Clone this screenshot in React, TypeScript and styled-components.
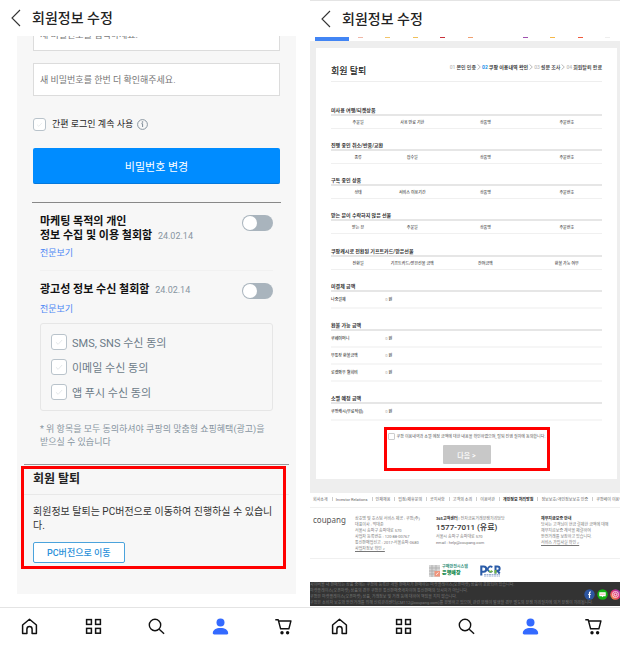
import React from 'react';
import styled, { createGlobalStyle, css } from 'styled-components';

const GlobalStyle = createGlobalStyle`
  *, *::before, *::after { box-sizing: border-box; }
  body {
    margin: 0;
    background: #fff;
    color: #222;
    font-family: Roboto, "Noto Sans CJK KR", sans-serif;
  }
  h1, h2, h3, p, ul, ol, address { margin: 0; padding: 0; font-style: normal; }
  ul, ol { list-style: none; }
  a { color: inherit; text-decoration: none; }
  button, input { font-family: inherit; margin: 0; }
`;

const Screens = styled.div`
  display: grid;
  grid-template-columns: minmax(0, 1fr) minmax(0, 1fr);
  min-height: 100vh;
`;

const Phone = styled.section<{ $ruled?: boolean }>`
  display: flex;
  flex-direction: column;
  min-width: 0;
  overflow: hidden;
  border-top: ${(p) => (p.$ruled ? '1px solid #e4e4e4' : '0')};
`;

const Header = styled.header`
  display: flex;
  align-items: center;
  gap: 11px;
  height: 36px;
  padding: 0 11px;
  flex: none;
`;

const BackButton = styled.button`
  display: flex;
  padding: 0;
  border: 0;
  background: none;
  color: #333;
`;

const Title = styled.h1`
  font-size: 14px;
  line-height: 20px;
  font-weight: 500;
  color: #222;
`;

const Main = styled.main`
  flex: 1;
  overflow: hidden;
`;

/* ---------- left screen ---------- */

const Panel = styled.div`
  margin: 0 14px 13px 17px;
  padding: 0 16px 31px;
  background: #f7f7f7;
  overflow: hidden;
`;

const PasswordFields = styled.div`
  display: flex;
  flex-direction: column;
  gap: 12px;
  margin-top: -18px;
`;

const TextField = styled.input`
  width: 100%;
  height: 33px;
  padding: 0 6px;
  border: 1px solid #dcdcdc;
  border-radius: 0;
  background: #fff;
  font-size: 9px;
  &::placeholder { color: #777; opacity: 1; }
`;

const tick = css`
  background-image: url("data:image/svg+xml,%3Csvg xmlns='http://www.w3.org/2000/svg' viewBox='0 0 16 16'%3E%3Cpath d='M4.5 8.3l2.5 2.4 4.6-5' fill='none' stroke='%23dfe3e6' stroke-width='1'/%3E%3C/svg%3E");
`;

const CheckInput = styled.input<{ $size: number }>`
  appearance: none;
  flex: none;
  width: ${(p) => p.$size}px;
  height: ${(p) => p.$size}px;
  border: 1px solid ${(p) => (p.$size > 8 ? '#b9c3cb' : '#ccc')};
  border-radius: ${(p) => (p.$size > 8 ? 3 : 1)}px;
  background-color: #fff;
  ${(p) => p.$size > 8 && tick}
`;

const EasyLogin = styled.div`
  display: flex;
  align-items: center;
  gap: 4px;
  margin-top: 21px;
  height: 14px;
`;

const EasyLabel = styled.label`
  display: flex;
  align-items: center;
  gap: 6px;
  font-size: 9px;
  line-height: 14px;
  color: #222;
`;

const PrimaryButton = styled.button`
  display: block;
  width: 100%;
  height: 36px;
  margin-top: 17px;
  border: 0;
  border-bottom: 1px solid #0478dc;
  border-radius: 2px;
  background: #008cff;
  color: #fff;
  font-size: 11px;
`;

const Consents = styled.div`
  margin: 18px -1px 0;
  padding: 0 8px 15px;
  border-top: 1px solid #888;
`;

const Consent = styled.section<{ $first?: boolean }>`
  padding-top: 12px;
  padding-bottom: ${(p) => (p.$first ? 10 : 0)}px;
  border-bottom: ${(p) => (p.$first ? '1px solid #f1f1f1' : '0')};
`;

const ConsentHead = styled.div`
  display: flex;
  justify-content: space-between;
  align-items: flex-start;
`;

const ConsentTitle = styled.h2`
  font-size: 11px;
  line-height: 14px;
  font-weight: 700;
  color: #111;
`;

const ConsentDate = styled.time`
  margin-left: 3px;
  font-size: 9px;
  line-height: 9px;
  font-weight: 400;
  color: #8795a1;
`;

const Toggle = styled.input`
  appearance: none;
  flex: none;
  display: flex;
  width: 31px;
  height: 16px;
  padding: 1px;
  border-radius: 8px;
  background: #a9b4bd;
  &::before {
    content: '';
    width: 14px;
    height: 14px;
    border-radius: 50%;
    background: #fff;
  }
`;

const DetailLink = styled.a`
  display: block;
  width: max-content;
  margin-top: 3px;
  font-size: 9px;
  line-height: 14px;
  color: #4b86f5;
`;

const Channels = styled.ul`
  display: flex;
  flex-direction: column;
  gap: 9px;
  margin-top: 7px;
  padding: 10px;
  border: 1px solid #e6e6e6;
  border-radius: 3px;
`;

const ChannelLabel = styled.label`
  display: flex;
  align-items: center;
  gap: 5px;
  height: 16px;
  font-size: 11px;
  color: #6b7a87;
`;

const ConsentNote = styled.p`
  margin-top: 12px;
  font-size: 9px;
  line-height: 13px;
  color: #8795a1;
`;

const Withdraw = styled.section`
  position: relative;
  margin: 0 -9px;
  border-top: 1px solid #999;
`;

const WithdrawTitle = styled.h2`
  padding: 0 9px;
  border-bottom: 1px solid #e8e8e8;
  font-size: 12px;
  line-height: 29px;
  font-weight: 700;
  color: #222;
`;

const WithdrawBody = styled.div`
  padding: 10px 9px 0;
  font-size: 10px;
  line-height: 14px;
  color: #333;
`;

const OutlineButton = styled.button`
  display: block;
  height: 21px;
  margin-top: 9px;
  padding: 0 13px;
  border: 1px solid #4ba3dc;
  border-radius: 2px;
  background: #fff;
  color: #2b90d9;
  font-size: 9px;
  font-weight: 500;
`;

const Highlight = styled.div`
  position: absolute;
  top: 1px;
  right: 3px;
  bottom: -6px;
  left: -3px;
  border: 3px solid #f00;
  pointer-events: none;
`;

/* ---------- bottom tab bar ---------- */

const TabBar = styled.nav`
  display: flex;
  justify-content: space-between;
  align-items: center;
  flex: none;
  height: 38px;
  padding: 0 18px 0 21px;
  border-top: 1px solid #e4e4e4;
`;

const TabLink = styled.a<{ $active?: boolean }>`
  display: flex;
  color: ${(p) => (p.$active ? '#346aff' : '#111')};
`;

/* ---------- right screen ---------- */

const CategoryStrip = styled.div`
  display: flex;
  height: 4px;
  padding: 0 10px 0 5px;
`;

const CategoryTab = styled.span`
  flex: none;
  width: 34px;
  background: #4285f4;
`;

const CategoryMarks = styled.div`
  display: flex;
  flex: 1;
  justify-content: space-between;
  padding-left: 9px;
`;

const CategoryMark = styled.span<{ $color: string }>`
  width: 5px;
  height: 1px;
  background: ${(p) => p.$color};
`;

const Backdrop = styled.div`
  padding: 7px 3px 14px 6px;
  background: #eee;
`;

const Card = styled.div`
  padding: 15px 15px 8px;
  background: #fff;
`;

const CardHead = styled.div`
  display: flex;
  justify-content: space-between;
  align-items: flex-start;
  padding-bottom: 2px;
  margin-bottom: 24px;
  border-bottom: 1px solid #eee;
`;

const CardTitle = styled.h2`
  font-size: 9px;
  line-height: 16px;
  font-weight: 500;
  color: #222;
`;

const Steps = styled.ol`
  display: flex;
  align-items: center;
  gap: 1px;
  font-size: 5px;
  line-height: 8px;
  white-space: nowrap;
  color: #333;
`;

const Step = styled.li<{ $current?: boolean }>`
  display: flex;
  align-items: center;
  gap: 1px;
  font-weight: ${(p) => (p.$current ? 700 : 500)};
`;

const StepNumber = styled.span<{ $current?: boolean }>`
  color: ${(p) => (p.$current ? '#1a8fe8' : '#bbb')};
`;

const Ledger = styled.table<{ $gap: number }>`
  width: 100%;
  margin-bottom: ${(p) => p.$gap}px;
  table-layout: fixed;
  border-collapse: separate;
  border-spacing: 0;
  caption {
    font-size: 5px;
    line-height: 8px;
    font-weight: 700;
    text-align: left;
    color: #333;
  }
`;

const HeadCell = styled.th<{ $width: string }>`
  width: ${(p) => p.$width};
  height: 15px;
  padding: 1px 0 0;
  border-top: 2px solid #e6e6e6;
  border-bottom: 1px solid #f0f0f0;
  font-size: 4px;
  line-height: 8px;
  font-weight: 500;
  text-align: center;
  color: #444;
`;

const AmountBody = styled.tbody`
  th, td {
    height: 17px;
    padding: 0;
    border-bottom: 2px solid #f6f6f6;
    font-size: 4px;
    line-height: 8px;
    font-weight: 500;
    text-align: left;
    color: #333;
  }
  th { width: 20%; }
  tr:first-child > * { height: 19px; border-top: 2px solid #e6e6e6; }
`;

const Zero = styled.span`
  margin-right: 1px;
  color: #bbb;
`;

const Confirm = styled.div`
  display: flex;
  flex-direction: column;
  align-items: center;
  gap: 5px;
  width: 166px;
  max-width: 100%;
  height: 44px;
  margin: 6px auto 0;
  padding-top: 3px;
  border: 3px solid #f00;
`;

const ConfirmLabel = styled.label`
  display: flex;
  align-items: center;
  gap: 2px;
  font-size: 4px;
  line-height: 7px;
  white-space: nowrap;
  color: #555;
`;

const NextButton = styled.button`
  width: 48px;
  height: 19px;
  padding: 0;
  border: 0;
  border-radius: 1px;
  background: #c8c8c8;
  color: #fff;
  font-size: 7px;
  font-weight: 500;
`;

const FooterLinks = styled.ul`
  display: flex;
  align-items: center;
  height: 15px;
  padding-left: 3px;
  border-bottom: 1px solid #f0f0f0;
  white-space: nowrap;
  font-size: 4px;
  line-height: 8px;
`;

const FooterItem = styled.li<{ $strong?: boolean }>`
  flex: none;
  font-weight: ${(p) => (p.$strong ? 700 : 400)};
  color: ${(p) => (p.$strong ? '#222' : '#666')};
  &:not(:first-child)::before {
    content: '';
    display: inline-block;
    width: 1px;
    height: 4px;
    margin: 0 3px 0 4px;
    background: #ccc;
  }
`;

const Company = styled.div`
  display: grid;
  grid-template-columns: 42px 81px 105px minmax(0, 1fr);
  padding: 8px 0 6px 3px;
  border-bottom: 1px solid #f0f0f0;
  font-size: 4px;
  line-height: 6px;
  white-space: nowrap;
  color: #777;
`;

const Wordmark = styled.span`
  font-family: "Noto Sans", sans-serif;
  font-size: 8px;
  line-height: 8px;
  color: #555;
`;

const Strong = styled.strong`
  font-weight: 700;
  color: #333;
`;

const Underlined = styled.a`
  text-decoration: underline;
`;

const Hotline = styled.p`
  margin: 1px 0;
  font-size: 8px;
  line-height: 10px;
  font-weight: 500;
  color: #333;
`;

const Marks = styled.div`
  display: flex;
  justify-content: center;
  align-items: center;
  gap: 12px;
  height: 23px;
`;

const BankMark = styled.div`
  display: flex;
  align-items: center;
  gap: 2px;
`;

const BankText = styled.div`
  display: flex;
  flex-direction: column;
  font-size: 4px;
  line-height: 4px;
  font-weight: 700;
  color: #33907c;
  white-space: nowrap;
`;

const BankName = styled.strong`
  font-size: 5px;
  line-height: 7px;
  font-weight: 900;
  color: #168a50;
`;

const Legal = styled.div`
  display: flex;
  justify-content: space-between;
  align-items: center;
  height: 24px;
  overflow: hidden;
  background: #333;
`;

const LegalText = styled.div`
  flex: 1;
  min-width: 0;
  font-size: 4px;
  line-height: 6px;
  white-space: nowrap;
  color: #777;
`;

const Socials = styled.div`
  display: flex;
  flex: none;
  gap: 2px;
  margin-right: -1px;
`;

const SocialLink = styled.a`
  display: flex;
`;

/* ---------- icons ---------- */

const BackIcon = () => (
  <svg width="10" height="18" viewBox="0 0 10 18" fill="none" stroke="currentColor" strokeWidth="1.1">
    <path d="M9 1 1 9l8 8" />
  </svg>
);

const InfoIcon = () => (
  <svg width="11" height="11" viewBox="0 0 11 11" role="img" aria-label="안내">
    <circle cx="5.5" cy="5.5" r="4.9" fill="none" stroke="#7d8b97" strokeWidth="0.9" />
    <path d="M4.4 4.7h1.2v3.3" fill="none" stroke="#7d8b97" strokeWidth="1" />
    <circle cx="5.5" cy="3" r="0.8" fill="#7d8b97" />
  </svg>
);

const HomeIcon = () => (
  <svg width="17" height="17" viewBox="0 0 17 17" fill="none" stroke="currentColor" strokeWidth="1.5" strokeLinejoin="round">
    <path d="M1.6 7 8.5 1.2 15.4 7v8.6h-4.3v-4.4a2.6 2.6 0 0 0-5.2 0v4.4H1.6z" />
  </svg>
);

const GridIcon = () => (
  <svg width="17" height="17" viewBox="0 0 17 17" fill="none" stroke="currentColor" strokeWidth="1.5">
    <rect x="1.6" y="1.6" width="4.8" height="4.8" />
    <rect x="10.6" y="1.6" width="4.8" height="4.8" />
    <rect x="1.6" y="10.4" width="4.8" height="4.8" />
    <rect x="10.6" y="10.4" width="4.8" height="4.8" />
  </svg>
);

const SearchIcon = () => (
  <svg width="17" height="17" viewBox="0 0 17 17" fill="none" stroke="currentColor" strokeWidth="1.4">
    <circle cx="7" cy="7" r="5.7" />
    <path d="m11.2 11.2 4.9 4.6" />
  </svg>
);

const PersonIcon = () => (
  <svg width="17" height="17" viewBox="0 0 17 17" fill="currentColor">
    <circle cx="8.5" cy="4.6" r="4" />
    <path d="M.8 15.2c0-3.4 3.2-5.3 7.7-5.3s7.7 1.9 7.7 5.3c0 .8-.6 1.2-1.4 1.2H2.2c-.8 0-1.4-.4-1.4-1.2z" />
  </svg>
);

const CartIcon = () => (
  <svg width="17" height="17" viewBox="0 0 17 17" fill="none" stroke="currentColor" strokeWidth="1.4" strokeLinejoin="round">
    <path d="M.3 1.7h2.9l2.4 9h8.3l2-7.7H3.6" />
    <circle cx="7" cy="14.7" r="1.7" fill="currentColor" stroke="none" />
    <circle cx="12.6" cy="14.7" r="1.7" fill="currentColor" stroke="none" />
  </svg>
);

const StepArrow = () => (
  <svg width="4" height="6" viewBox="0 0 4 6" fill="none" stroke="#999" strokeWidth="0.7">
    <path d="M.5.4 3.3 3 .5 5.6" />
  </svg>
);

const BankIcon = () => (
  <svg width="11" height="12" viewBox="0 0 11 12">
    <rect width="11" height="12" fill="#d5d5d5" />
    <path d="M0 3h11M0 6h6M0 9h6M3 0v12M7 0v6" stroke="#aaa" strokeWidth="0.8" />
    <rect x="5.5" y="6" width="5.5" height="5.5" fill="#f0957d" />
    <path d="M7 9.8 9.5 7.5" stroke="#fff" strokeWidth="0.8" />
  </svg>
);

const PcrIcon = () => (
  <svg width="21" height="12" viewBox="0 0 21 12" fill="none" role="img" aria-label="PCR">
    <path d="M1.3 10.5V1.5h2.4a2.5 2.5 0 0 1 0 5.2H1.3" stroke="#2b5ca8" strokeWidth="2.1" />
    <path d="M12.3 2.3A2.6 2.6 0 1 0 12.3 6" stroke="#2b5ca8" strokeWidth="1.7" />
    <path d="M9 5.8a2.6 2.6 0 0 0 3.3.2" stroke="#74b943" strokeWidth="1.8" />
    <path d="M15.5 8.5v-7h2a2 2 0 0 1 0 4.3h-2m2 0 2.2 2.7" stroke="#2b5ca8" strokeWidth="2" />
    <path d="M15.5 5v3.5" stroke="#74b943" strokeWidth="2" />
    <path d="M4 9.5h16M4 11h16" stroke="#7d9bc6" strokeWidth="0.8" strokeDasharray="2 0.5" />
  </svg>
);

const FacebookIcon = () => (
  <svg width="11" height="11" viewBox="0 0 11 11">
    <circle cx="5.5" cy="5.5" r="5.2" fill="#2c55a0" />
    <path d="M7 3H6.2c-.6 0-.7.3-.7.8V9M4.2 5.5h2.6" fill="none" stroke="#fff" strokeWidth="1.2" />
  </svg>
);

const BlogIcon = () => (
  <svg width="11" height="11" viewBox="0 0 11 11">
    <circle cx="5.5" cy="5.5" r="5.2" fill="#14b314" />
    <path d="M2.3 3.2h6.4v4H6.2L5.5 8.3l-.7-1.1H2.3z" fill="#fff" />
    <path d="M3.2 5.2h4.6" stroke="#e0a080" strokeWidth="0.8" />
  </svg>
);

const InstagramIcon = () => (
  <svg width="11" height="11" viewBox="0 0 11 11">
    <defs>
      <linearGradient id="insta" x1="0" y1="1" x2="1" y2="0">
        <stop offset="0" stopColor="#fbb03b" />
        <stop offset="0.5" stopColor="#e1306c" />
        <stop offset="1" stopColor="#8a3ac8" />
      </linearGradient>
    </defs>
    <circle cx="5.5" cy="5.5" r="5.2" fill="url(#insta)" />
    <rect x="2.8" y="2.8" width="5.4" height="5.4" rx="1.5" fill="none" stroke="#fff" strokeWidth="0.8" />
    <circle cx="5.5" cy="5.5" r="1.3" fill="none" stroke="#fff" strokeWidth="0.8" />
  </svg>
);

/* ---------- data ---------- */

const channels = ['SMS, SNS 수신 동의', '이메일 수신 동의', '앱 푸시 수신 동의'];

const steps = ['본인 인증', '쿠팡 이용내역 확인', '설문 조사', '회원탈퇴 완료'];

const columnWidths = ['20%', '20%', '34%', '26%'];

const histories = [
  { title: '미사용 여행/티켓상품', gap: 12, columns: ['주문일', '사용 만료 기한', '상품명', '주문번호'] },
  { title: '진행 중인 취소/반품/교환', gap: 12, columns: ['종류', '접수일', '상품명', '주문번호'] },
  { title: '구독 중인 상품', gap: 12, columns: ['상태', '서비스 이용기간', '상품명', '주문번호'] },
  { title: '받는 분이 수락하지 않은 선물', gap: 13, columns: ['받는 분', '주문일', '상품명', '주문번호'] },
  { title: '쿠팡캐시로 전환된 기프트카드/받은선물', gap: 12, columns: ['전환일', '기프트카드/받은선물 금액', '잔여금액', '환불 가능 여부'] },
];

const amounts = [
  { title: '미결제 금액', gap: 12, rows: ['나중결제'] },
  { title: '환불 가능 금액', gap: 12, rows: ['쿠페이머니', '무통장 환불금액', '로켓와우 월회비'] },
  { title: '소멸 예정 금액', gap: 0, rows: ['쿠팡캐시(무료적립)'] },
];

const footerLinks = [
  '회사소개', 'Investor Relations', '인재채용', '입점/제휴문의', '공지사항', '고객의 소리',
  '이용약관', '개인정보 처리방침', '정보보호/개인정보보호 인증', '쿠팡페이 이용약관',
];

const markColors = ['#f0b8a8', '#f2c46a', '#f0c05a', '#c8323c', '#f0a070', '#fff', '#a050b0', '#f5b84a', '#f05a3c', '#eee'];

const tabs = [
  { label: '홈', Icon: HomeIcon },
  { label: '카테고리', Icon: GridIcon },
  { label: '검색', Icon: SearchIcon },
  { label: '마이쿠팡', Icon: PersonIcon, active: true },
  { label: '장바구니', Icon: CartIcon },
];

/* ---------- shared parts ---------- */

const ScreenHeader = () => (
  <Header>
    <BackButton type="button" aria-label="뒤로"><BackIcon /></BackButton>
    <Title>회원정보 수정</Title>
  </Header>
);

const Tabs = () => (
  <TabBar>
    {tabs.map(({ label, Icon, active }) => (
      <TabLink key={label} href="#" aria-label={label} $active={active}><Icon /></TabLink>
    ))}
  </TabBar>
);

const EditScreen = () => (
  <Phone>
    <ScreenHeader />
    <Main>
      <Panel>
        <PasswordFields>
          <TextField type="password" aria-label="새 비밀번호" placeholder="새 비밀번호를 입력하세요." />
          <TextField type="password" aria-label="새 비밀번호 확인" placeholder="새 비밀번호를 한번 더 확인해주세요." />
        </PasswordFields>
        <EasyLogin>
          <EasyLabel>
            <CheckInput type="checkbox" $size={13} />
            간편 로그인 계속 사용
          </EasyLabel>
          <InfoIcon />
        </EasyLogin>
        <PrimaryButton type="button">비밀번호 변경</PrimaryButton>
        <Consents>
          <Consent $first>
            <ConsentHead>
              <ConsentTitle>
                마케팅 목적의 개인<br />정보 수집 및 이용 철회함{' '}
                <ConsentDate>24.02.14</ConsentDate>
              </ConsentTitle>
              <Toggle type="checkbox" role="switch" aria-label="마케팅 목적의 개인정보 수집 및 이용" />
            </ConsentHead>
            <DetailLink href="#">전문보기</DetailLink>
          </Consent>
          <Consent>
            <ConsentHead>
              <ConsentTitle>
                광고성 정보 수신 철회함{' '}
                <ConsentDate>24.02.14</ConsentDate>
              </ConsentTitle>
              <Toggle type="checkbox" role="switch" aria-label="광고성 정보 수신" />
            </ConsentHead>
            <DetailLink href="#">전문보기</DetailLink>
            <Channels>
              {channels.map((c) => (
                <li key={c}>
                  <ChannelLabel><CheckInput type="checkbox" $size={16} />{c}</ChannelLabel>
                </li>
              ))}
            </Channels>
            <ConsentNote>* 위 항목을 모두 동의하셔야 쿠팡의 맞춤형 쇼핑혜택(광고)을 받으실 수 있습니다</ConsentNote>
          </Consent>
        </Consents>
        <Withdraw>
          <WithdrawTitle>회원 탈퇴</WithdrawTitle>
          <WithdrawBody>
            <p>회원정보 탈퇴는 PC버전으로 이동하여 진행하실 수 있습니다.</p>
            <OutlineButton type="button">PC버전으로 이동</OutlineButton>
          </WithdrawBody>
          <Highlight />
        </Withdraw>
      </Panel>
    </Main>
    <Tabs />
  </Phone>
);

const WithdrawScreen = () => (
  <Phone $ruled>
    <ScreenHeader />
    <CategoryStrip>
      <CategoryTab />
      <CategoryMarks>
        {markColors.map((c) => <CategoryMark key={c} $color={c} />)}
      </CategoryMarks>
    </CategoryStrip>
    <Main>
      <Backdrop>
        <Card>
          <CardHead>
            <CardTitle>회원 탈퇴</CardTitle>
            <Steps>
              {steps.map((s, i) => (
                <Step key={s} $current={i === 1}>
                  {i > 0 && <StepArrow />}
                  <StepNumber $current={i === 1}>{`0${i + 1}`}</StepNumber>
                  {s}
                </Step>
              ))}
            </Steps>
          </CardHead>
          {histories.map((h) => (
            <Ledger key={h.title} $gap={h.gap}>
              <caption>{h.title}</caption>
              <thead>
                <tr>
                  {h.columns.map((c, n) => <HeadCell key={c} scope="col" $width={columnWidths[n]}>{c}</HeadCell>)}
                </tr>
              </thead>
            </Ledger>
          ))}
          {amounts.map((a) => (
            <Ledger key={a.title} $gap={a.gap}>
              <caption>{a.title}</caption>
              <AmountBody>
                {a.rows.map((r) => (
                  <tr key={r}><th scope="row">{r}</th><td><Zero>0</Zero>원</td></tr>
                ))}
              </AmountBody>
            </Ledger>
          ))}
          <Confirm>
            <ConfirmLabel>
              <CheckInput type="checkbox" $size={7} />
              쿠팡 이용내역과 소멸 예정 금액에 대한 내용을 확인하였으며, 탈퇴 진행 절차에 동의합니다.
            </ConfirmLabel>
            <NextButton type="button">다음 &gt;</NextButton>
          </Confirm>
        </Card>
      </Backdrop>
      <footer>
        <FooterLinks>
          {footerLinks.map((l) => (
            <FooterItem key={l} $strong={l === '개인정보 처리방침'}><a href="#">{l}</a></FooterItem>
          ))}
        </FooterLinks>
        <Company>
          <Wordmark>coupang</Wordmark>
          <address>
            <p>상호명 및 호스팅 서비스 제공 : 쿠팡(주)</p>
            <p>대표이사 : 박대준</p>
            <p>서울시 송파구 송파대로 570</p>
            <p>사업자 등록번호 : 120-88-00767</p>
            <p>통신판매업신고 : 2017-서울송파-0680</p>
            <p><Underlined href="#">사업자정보 확인 &gt;</Underlined></p>
          </address>
          <div>
            <p><Strong>365고객센터</Strong> | 전자금융거래분쟁처리담당</p>
            <Hotline>1577-7011 (유료)</Hotline>
            <p>서울시 송파구 송파대로 570</p>
            <p>email : help@coupang.com</p>
          </div>
          <div>
            <p><Strong>채무지급보증 안내</Strong></p>
            <p>당사는 고객님이 현금 결제한 금액에 대해</p>
            <p>채무지급보증 계약을 체결하여</p>
            <p>안전거래를 보장하고 있습니다.</p>
            <p><Underlined href="#">서비스 가입사실 확인 &gt;</Underlined></p>
          </div>
        </Company>
        <Marks>
          <BankMark>
            <BankIcon />
            <BankText>
              <span>구매안전시스템</span>
              <BankName>은행매장</BankName>
            </BankText>
          </BankMark>
          <PcrIcon />
        </Marks>
        <Legal>
          <LegalText>
            <p>사이버몰 내 판매되는 상품 중에는 쿠팡에 등록한 개별 판매자가 판매하는 마켓플레이스(오픈마켓) 상품이 포함되어 있습니다.</p>
            <p>마켓플레이스(오픈마켓) 상품의 경우 쿠팡은 통신판매중개자이며 통신판매의 당사자가 아닙니다.</p>
            <p>쿠팡은 마켓플레이스(오픈마켓) 상품, 거래정보 및 거래 등에 대하여 책임을 지지 않습니다.</p>
            <p>쿠팡은 소비자 보호와 안전거래를 위해 신뢰관리센터(CM112@coupang.com)를 운영하고 있으며, 관련 분쟁이 발생할 경우 별도의 분쟁 처리절차에 의거 분쟁이 처리됩니다.</p>
          </LegalText>
          <Socials>
            <SocialLink href="#" aria-label="페이스북"><FacebookIcon /></SocialLink>
            <SocialLink href="#" aria-label="블로그"><BlogIcon /></SocialLink>
            <SocialLink href="#" aria-label="인스타그램"><InstagramIcon /></SocialLink>
          </Socials>
        </Legal>
      </footer>
    </Main>
    <Tabs />
  </Phone>
);

export default function App() {
  return (
    <>
      <GlobalStyle />
      <Screens>
        <EditScreen />
        <WithdrawScreen />
      </Screens>
    </>
  );
}
